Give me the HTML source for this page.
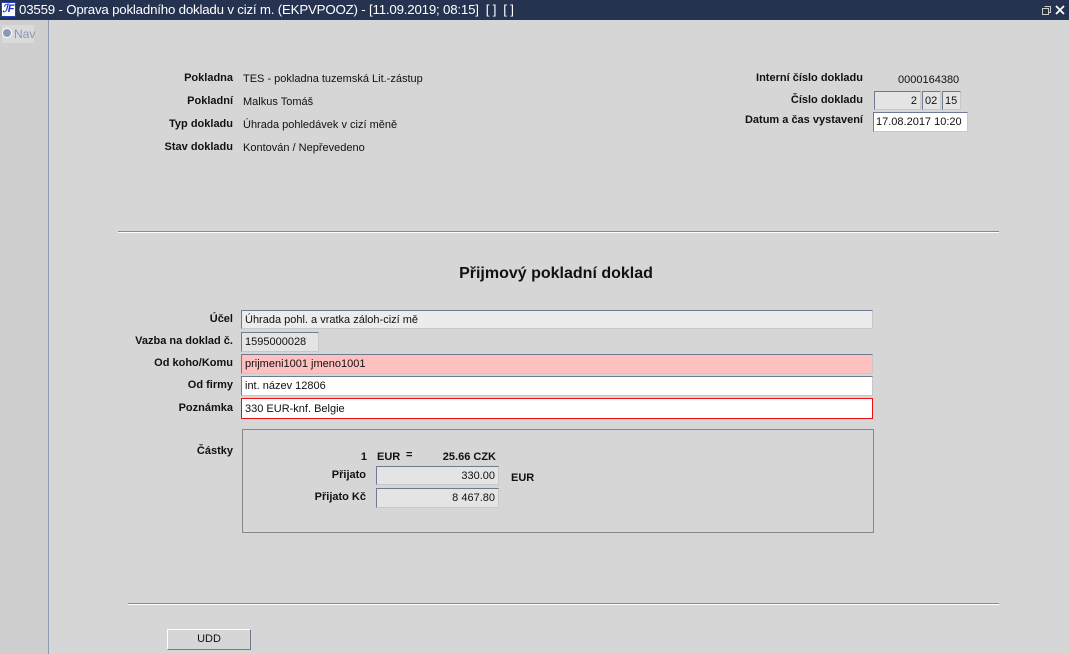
<!DOCTYPE html>
<html><head><meta charset="utf-8"><style>
*{margin:0;padding:0;box-sizing:border-box}
body{width:1069px;height:654px;background:#d6d6d6;font-family:"Liberation Sans",Arial,sans-serif;font-size:11px;color:#111;position:relative;overflow:hidden}
.a{position:absolute;white-space:nowrap}
.l{position:absolute;font-weight:bold;text-align:right;white-space:nowrap}
.box{position:absolute;border:1px solid #6d7a92;border-right-color:#c8c8c8;border-bottom-color:#c8c8c8;background:#e4e4e4;padding:3px 3px;font-size:11px;line-height:13px;white-space:nowrap}
.r{text-align:right}
</style></head><body>
<div class="a" style="left:0;top:0;width:1069px;height:20px;background:#253350"></div>
<div class="a" style="left:1px;top:2px;width:15px;height:15px;background:#fff;border:1px solid #2040c0;color:#1a2fd0;font:bold italic 11px 'Liberation Sans';line-height:13px;text-align:center">ℐF</div>
<div class="a" style="left:19px;top:2px;color:#fff;font-size:13.3px;line-height:16px;letter-spacing:-0.2px">03559 - Oprava pokladního dokladu v cizí m. (EKPVPOOZ) - [11.09.2019; 08:15]&nbsp; [ ]&nbsp; [ ]</div>
<svg class="a" style="left:1040px;top:3px" width="28" height="14" viewBox="0 0 28 14"><rect x="2.5" y="5.5" width="6" height="6" fill="none" stroke="#ccc"/><path d="M4.5 3.5h6v6h-2" fill="none" stroke="#ccc"/><path d="M16 3l8 8M24 3l-8 8" stroke="#fff" stroke-width="1.8"/></svg>
<div class="a" style="left:0;top:20px;width:49px;height:634px;background:#cfcfcf;border-right:1px solid #8d9ab2"></div>
<div class="a" style="left:2px;top:25px;width:32px;height:18px;background:#dadada"></div>
<div class="a" style="left:2px;top:28px;width:10px;height:10px;border-radius:50%;background:#8a9ab5;border:1px solid #fff"></div>
<div class="a" style="left:14px;top:27px;color:#8898b8;font-size:12px">Nav</div>

<div class="l" style="right:836px;top:72px">Pokladna</div>
<div class="l" style="right:836px;top:95px">Pokladní</div>
<div class="l" style="right:836px;top:118px">Typ dokladu</div>
<div class="l" style="right:836px;top:141px">Stav dokladu</div>
<div class="a" style="left:243px;top:73px">TES - pokladna tuzemská Lit.-zástup</div>
<div class="a" style="left:243px;top:96px">Malkus Tomáš</div>
<div class="a" style="left:243px;top:119px">Úhrada pohledávek v cizí měně</div>
<div class="a" style="left:243px;top:142px">Kontován / Nepřevedeno</div>

<div class="l" style="right:206px;top:72px">Interní číslo dokladu</div>
<div class="a" style="left:898px;top:74px">0000164380</div>
<div class="l" style="right:206px;top:94px">Číslo dokladu</div>
<div class="box r" style="left:874px;top:91px;width:47px;height:19px">2</div>
<div class="box" style="left:922px;top:91px;width:19px;height:19px;padding:3px 2px">02</div>
<div class="box" style="left:942px;top:91px;width:19px;height:19px;padding:3px 2px">15</div>
<div class="l" style="right:206px;top:114px">Datum a čas vystavení</div>
<div class="box" style="left:873px;top:112px;width:95px;height:20px;background:#fff;padding:3px 2px">17.08.2017 10:20</div>

<div class="a" style="left:118px;top:231px;width:881px;height:2px;border-top:1px solid #8a8a8a;border-bottom:1px solid #fff"></div>
<div class="a" style="left:0;width:1112px;top:265px;text-align:center;font-weight:bold;font-size:16px">Přijmový pokladní doklad</div>

<div class="l" style="right:836px;top:313px">Účel</div>
<div class="box" style="left:241px;top:310px;width:632px;height:19px;background:#ececec">Úhrada pohl. a vratka záloh-cizí mě</div>
<div class="l" style="right:836px;top:335px">Vazba na doklad č.</div>
<div class="box" style="left:241px;top:332px;width:78px;height:20px;background:#e4e4e4">1595000028</div>
<div class="l" style="right:836px;top:357px">Od koho/Komu</div>
<div class="box" style="left:241px;top:354px;width:632px;height:20px;background:#ffc0c0">prijmeni1001 jmeno1001</div>
<div class="l" style="right:836px;top:379px">Od firmy</div>
<div class="box" style="left:241px;top:376px;width:632px;height:20px;background:#fff">int. název 12806</div>
<div class="l" style="right:836px;top:402px">Poznámka</div>
<div class="box" style="left:241px;top:398px;width:632px;height:21px;background:#fff;border:1px solid #e81010;padding:4px 3px">330 EUR-knf. Belgie</div>

<div class="l" style="right:836px;top:445px">Částky</div>
<div class="a" style="left:242px;top:429px;width:632px;height:104px;border:1px solid #888"></div>
<div class="l" style="left:340px;width:27px;top:451px">1</div>
<div class="a" style="left:377px;top:451px;font-weight:bold">EUR</div>
<div class="a" style="left:406px;top:449px;font-weight:bold">=</div>
<div class="l" style="left:400px;width:96px;top:451px">25.66 CZK</div>
<div class="l" style="right:703px;top:469px">Přijato</div>
<div class="box r" style="left:376px;top:466px;width:123px;height:19px">330.00</div>
<div class="a" style="left:511px;top:472px;font-weight:bold">EUR</div>
<div class="l" style="right:703px;top:491px">Přijato Kč</div>
<div class="box r" style="left:376px;top:488px;width:123px;height:20px">8 467.80</div>

<div class="a" style="left:128px;top:603px;width:871px;height:2px;border-top:1px solid #8a8a8a;border-bottom:1px solid #fff"></div>
<div class="a" style="left:167px;top:629px;width:84px;height:21px;border:1px solid #6d7a92;border-top-color:#fff;border-left-color:#fff;text-align:center;line-height:19px;font-size:11px">UDD</div>
</body></html>
